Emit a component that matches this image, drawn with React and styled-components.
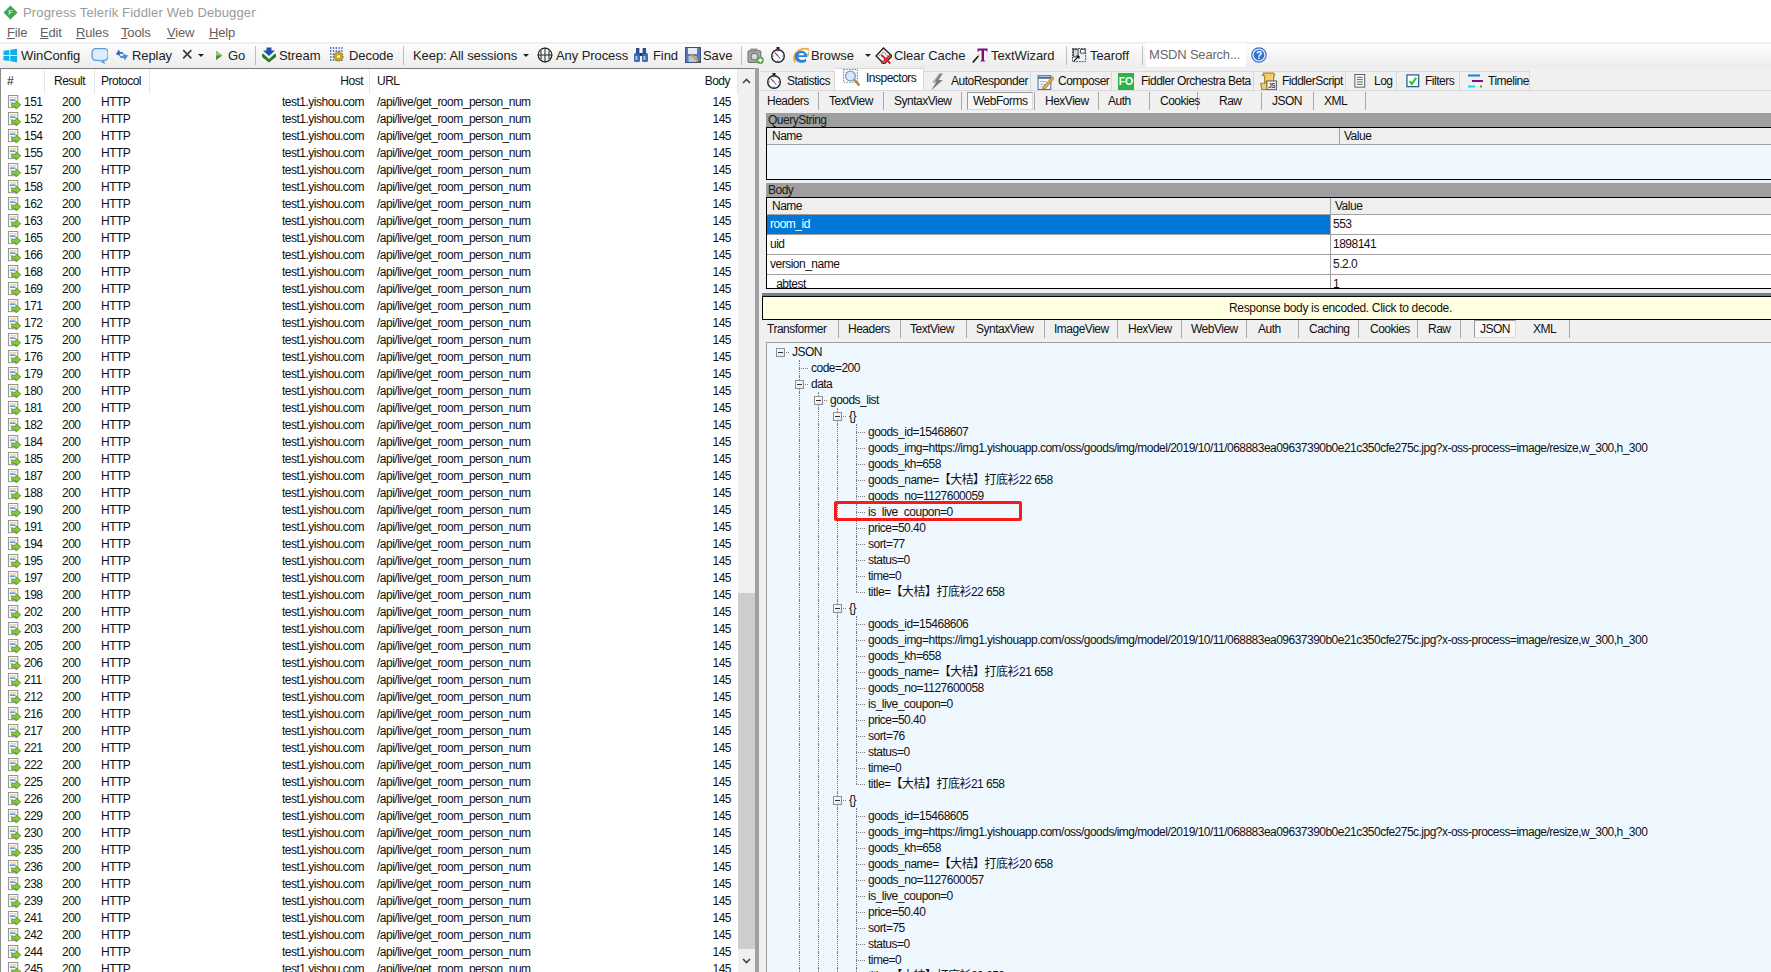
import React from "react";
import styled, { createGlobalStyle } from "styled-components";

const FONT = `"Liberation Sans", "Noto Sans CJK SC", sans-serif`;

const GlobalStyle = createGlobalStyle`
  html, body { margin: 0; padding: 0; background: #fff; overflow: hidden; }
  body { font-family: ${FONT}; font-size: 12px; color: #111; }
`;

const Page = styled.div`
  width: 1771px;
  height: 972px;
  overflow: hidden;
  display: flex;
  flex-direction: column;
  letter-spacing: -0.5px;
`;

const TitleBar = styled.div`
  height: 22px;
  flex: none;
  display: flex;
  align-items: center;
  padding: 2px 0 0 3px;
  box-sizing: border-box;
  gap: 5px;
  font-size: 13px;
  letter-spacing: 0.15px;
  color: #9a9a9a;
`;

const MenuBar = styled.div`
  height: 20px;
  flex: none;
  display: flex;
  align-items: center;
  font-size: 13px;
  letter-spacing: -0.15px;
  color: #5f5f5f;
`;

const MenuItem = styled.span`
  width: ${(p) => p.$w}px;
  &:first-child { margin-left: 7px; }
  &::first-letter { text-decoration: underline; }
`;

const Toolbar = styled.div`
  height: 26px;
  flex: none;
  display: flex;
  align-items: center;
  padding: 0 0 2px 3px;
  box-sizing: border-box;
  border-top: 2px solid #efefef;
  background: linear-gradient(#fdfdfd, #ececec);
  font-size: 13px;
  letter-spacing: -0.08px;
  color: #222;
`;

const ToolItem = styled.div`
  width: ${(p) => p.$w}px;
  flex: none;
  display: flex;
  align-items: center;
  gap: ${(p) => p.$gap ?? 4}px;
  white-space: nowrap;
  box-sizing: border-box;
`;

const Caret = styled.i`
  width: 0;
  height: 0;
  border: 3px solid transparent;
  border-top: 3px solid #222;
  border-bottom: 0;
  margin-left: ${(p) => p.$ml || 0}px;
`;

const ToolSep = styled.div`
  flex: none;
  width: 1px;
  height: 19px;
  background: #bdbdbd;
  margin: 0 ${(p) => p.$r}px 0 ${(p) => p.$l}px;
`;

const SearchBox = styled.div`
  flex: none;
  width: 100px;
  height: 24px;
  line-height: 24px;
  padding-left: 3px;
  box-sizing: border-box;
  background: #fff;
  color: #6a6a6a;
  letter-spacing: -0.2px;
  margin-right: 5px;
`;

const Main = styled.div`
  flex: 1;
  min-height: 0;
  display: flex;
`;

const SessionPane = styled.div`
  width: 755px;
  flex: none;
  display: flex;
  background: #fff;
  border-top: 1px solid #7c7c7c;
  border-left: 1px solid #8a8a8a;
  box-sizing: border-box;
  overflow: hidden;
`;

const SessionTable = styled.div`
  flex: 1;
  min-width: 0;
  overflow: hidden;
`;

const COLUMNS = "44px 50px 55px 220px 1fr";

const HeaderRow = styled.div`
  display: grid;
  grid-template-columns: ${COLUMNS};
  height: 25px;
  align-items: stretch;
`;

const HeaderCell = styled.div`
  line-height: 24px;
  border-right: 1px solid #e6e6e6;
  box-sizing: border-box;
  padding: 0 6px;
  text-align: ${(p) => p.$align || "left"};
  &:last-child { padding-right: 7px; }
`;

const UrlHead = styled.span`
  float: left;
  margin-left: 1px;
`;

const SessionRow = styled.div`
  display: grid;
  grid-template-columns: ${COLUMNS};
  height: 17px;
  line-height: 17px;
  white-space: nowrap;
`;

const SessionId = styled.div`
  display: flex;
  align-items: center;
  gap: 2px;
  padding-left: 6px;
`;

const ResultCell = styled.div`
  padding-left: 17px;
`;

const PlainCell = styled.div`
  padding: 0 6px;
  text-align: ${(p) => p.$align || "left"};
`;

const UrlCell = styled.div`
  display: flex;
  justify-content: space-between;
  padding: 0 7px;
`;

const Scrollbar = styled.div`
  width: 17px;
  flex: none;
  display: flex;
  flex-direction: column;
  background: #f0f0f0;
`;

const ScrollArrow = styled.div`
  height: 23px;
  flex: none;
  display: flex;
  align-items: center;
  justify-content: center;
`;

const ScrollTrack = styled.div`
  flex: 1;
  padding-top: 501px;
  display: flex;
`;

const ScrollThumb = styled.div`
  flex: 1;
  background: #cdcdcd;
`;

const Splitter = styled.div`
  width: 4px;
  flex: none;
  background: #a0a0a0;
`;

const RightPane = styled.div`
  flex: 1;
  min-width: 0;
  display: flex;
  flex-direction: column;
  background: #f0f0f0;
  overflow: hidden;
`;

const MainTabs = styled.div`
  height: 22px;
  flex: none;
  display: flex;
  align-items: flex-end;
  padding-left: 1px;
  border-bottom: 1px solid #d9d9d9;
`;

const MainTab = styled.div`
  width: ${(p) => p.$w}px;
  height: ${(p) => (p.$active ? 22 : 19)}px;
  flex: none;
  display: flex;
  align-items: center;
  gap: ${(p) => p.$gap || 5}px;
  padding: ${(p) => (p.$active ? "0 0 4px 8px" : `0 0 0 ${p.$pad ?? 5}px`)};
  box-sizing: border-box;
  background: ${(p) => (p.$active ? "#fff" : "#f0f0f0")};
  border: 1px solid #d9d9d9;
  border-bottom: 0;
  border-left: 0;
  white-space: nowrap;
`;

const SubTabs = styled.div`
  height: 19px;
  flex: none;
  display: flex;
  align-items: center;
  padding-left: 1px;
`;

const RespTabs = styled(SubTabs)`
  height: 22px;
  padding-bottom: 4px;
  box-sizing: border-box;
`;

const SubTab = styled.div`
  width: ${(p) => p.$w}px;
  height: 18px;
  line-height: 18px;
  flex: none;
  padding-left: ${(p) => p.$pad}px;
  box-sizing: border-box;
  white-space: nowrap;
  border-right: ${(p) => (p.$noSep ? 0 : "1px solid #a8a8a8")};
`;

const ActiveBox = styled.span`
  display: inline-block;
  height: 18px;
  line-height: 17px;
  padding: 0 5px;
  box-sizing: border-box;
  background: #f8f8f8;
  border: 1px solid #9a9a9a;
  border-right-color: #dcdcdc;
  border-bottom-color: #dcdcdc;
`;

const Section = styled.div`
  flex: none;
  margin: ${(p) => p.$top || 0}px 0 0 7px;
`;

const SectionBar = styled.div`
  height: 14px;
  line-height: 14px;
  padding-left: 2px;
  background: #9f9f9f;
  color: #1a1a1a;
`;

const NameTable = styled.div`
  border: 1px solid #000;
  border-right: 0;
  height: ${(p) => p.$h}px;
  box-sizing: border-box;
  background: ${(p) => p.$bg};
  overflow: hidden;
`;

const NameHead = styled.div`
  display: grid;
  grid-template-columns: ${(p) => p.$split}px 1fr;
  height: 16px;
  line-height: 16px;
  background: #efefef;
  border-bottom: 1px solid #a0a0a0;
`;

const HeadCell = styled.div`
  padding-left: 5px;
  & + & { border-left: 1px solid #a0a0a0; padding-left: 4px; }
`;

const NameRow = styled.div`
  display: grid;
  grid-template-columns: ${(p) => p.$split}px 1fr;
  height: 20px;
  box-sizing: border-box;
  line-height: 19px;
  border-bottom: 1px solid #a0a0a0;
`;

const NameCell = styled.div`
  padding-left: 3px;
  background: ${(p) => (p.$selected ? "#0078d7" : "transparent")};
  color: ${(p) => (p.$selected ? "#fff" : "#111")};
  & + & { border-left: 1px solid #a0a0a0; padding-left: 2px; }
`;

const SlateBar = styled.div`
  height: 3px;
  flex: none;
  margin: 4px 0 0 3px;
  background: #708090;
`;

const NoticeBar = styled.div`
  height: 24px;
  line-height: 23px;
  flex: none;
  margin-left: 3px;
  padding-left: 147px;
  text-align: center;
  box-sizing: border-box;
  background: #ffffe1;
  border: 1px solid #000;
  border-right: 0;
  letter-spacing: -0.33px;
`;

const TreePane = styled.div`
  flex: 1;
  min-height: 0;
  margin-left: 7px;
  padding: 1px 0 0 13px;
  overflow: hidden;
  background: #f0f8ff;
  border-top: 1px solid #a0a0a0;
  border-left: 1px solid #a0a0a0;
  position: relative;
`;

const TreeRow = styled.div`
  display: flex;
  height: 16px;
  line-height: 16px;
  white-space: nowrap;
`;

const TreeSpacer = styled.div`
  width: 19px;
  flex: none;
`;

const TreeGuide = styled(TreeSpacer)`
  border-left: 1px dotted #7a7a7a;
  box-sizing: border-box;
`;

const TreeJoint = styled.div`
  position: relative;
  width: 12px;
  flex: none;
  &::before {
    content: "";
    position: absolute;
    left: 0;
    top: 8px;
    width: 9px;
    border-top: 1px dotted #7a7a7a;
  }
  &::after {
    content: "";
    position: absolute;
    left: 0;
    top: 0;
    height: ${(p) => (p.$last ? 8 : 16)}px;
    border-left: 1px dotted #7a7a7a;
    display: ${(p) => (p.$root ? "none" : "block")};
  }
`;

const Toggle = styled.span`
  position: absolute;
  z-index: 1;
  left: -4px;
  top: 4px;
  width: 9px;
  height: 9px;
  box-sizing: border-box;
  border: 1px solid #8f8f8f;
  background: linear-gradient(135deg, #fff, #e4e4e4);
  &::after {
    content: "";
    position: absolute;
    left: 1px;
    top: 3px;
    width: 5px;
    height: 1px;
    background: #333;
  }
`;

const TreeText = styled.span`
  letter-spacing: -0.52px;
`;

const Highlight = styled.div`
  position: absolute;
  left: 67px;
  top: 158px;
  width: 188px;
  height: 20px;
  box-sizing: border-box;
  border: 3px solid #fb1a1a;
  border-radius: 2px;
`;

/* ---------- icons ---------- */

const Svg = styled.svg`
  flex: none;
  display: block;
`;

const Icon = ({ s = 16, children }) => (
  <Svg width={s} height={s} viewBox="0 0 16 16">
    {children}
  </Svg>
);

const LogoIcon = () => (
  <Icon s={15}>
    <path d="M8 0.5 15.5 8 8 15.5 0.5 8Z" fill="#3fa64a" />
    <text x="8" y="11" fontSize="8" textAnchor="middle" fill="#fff" fontFamily="Liberation Sans">F</text>
  </Icon>
);

const SessionIcon = () => (
  <Icon s={15}>
    <rect x="1.5" y="0.5" width="10" height="13" fill="#fbfbfb" stroke="#8d8d8d" />
    <path d="M3 3h7" stroke="#e8cf8e" strokeWidth="1.4" />
    <path d="M3 5.5h6" stroke="#5d8fd0" strokeWidth="1.6" />
    <path d="M3 8h3" stroke="#c8c8c8" />
    <path d="M5 8.8h4.5V6.2L14.7 10.5 9.5 14.8v-2.6H5Z" fill="#8cc63f" stroke="#4e8a1c" strokeWidth="0.8" />
  </Icon>
);

const WinIcon = () => (
  <Icon s={15}>
    <path d="M0.5 3 6.8 2v5.4H0.5ZM7.8 1.8 15 .8v6.6H7.8ZM0.5 8.4h6.3v5.4L0.5 13ZM7.8 8.4H15v6.8l-7.2-1.2Z" fill="#11aeea" />
  </Icon>
);

const BubbleIcon = () => (
  <Icon s={17}>
    <path d="M4.5 1.5h8a3.5 3.5 0 0 1 3.5 3.5v4a3.5 3.5 0 0 1-3.5 3.5H11l1.8 2.8L8 12.5H4.5A3.5 3.5 0 0 1 1 9V5a3.5 3.5 0 0 1 3.5-3.5Z" fill="#dbeeff" stroke="#5b9bd5" strokeWidth="1.2" />
  </Icon>
);

const ReplayIcon = () => (
  <Icon s={14}>
    <path d="M1 7 4.5 1.5 5.5 4.5h3l1.5 2-4.5.2.7 2.4Z" fill="#2f6db8" />
    <path d="M15 8.5 11 14l-1.2-2.7H6.6L5 9.2l4.4-.2-.7-2.4Z" fill="#4a90d9" />
  </Icon>
);

const XIcon = () => (
  <Icon s={13}>
    <path d="M1.5 1.5 11.5 11.5M11.5 1.5 1.5 11.5" stroke="#3c3c3c" strokeWidth="2.1" />
  </Icon>
);

const PlayIcon = () => (
  <Icon s={11}>
    <path d="M3 1 12 8 3 15Z" fill="#4f8a2c" />
    <path d="M3 1 12 8H3Z" fill="#9cc677" />
  </Icon>
);

const StreamIcon = () => (
  <Icon s={16}>
    <path d="M5.5 0.5h5v3h3.5L8 9 2 3.5h3.5Z" fill="#1b4fb0" />
    <path d="M2 6.5 8 12l6-5.5 1 1V10L8 15.5 1 10V7.5Z" fill="#2e7d1e" />
  </Icon>
);

const DecodeIcon = () => (
  <Icon s={16}>
    <path d="M1 1h14M1 4h14M1 7h14M1 10h14M1 13h14" stroke="#2c4fa8" strokeWidth="1.4" strokeDasharray="1.4 1.4" />
    <circle cx="9.5" cy="9.5" r="4.6" fill="#c8a22a" stroke="#8a6d10" strokeDasharray="1.5 1" />
    <circle cx="9.5" cy="9.5" r="1.6" fill="#fff3c0" />
  </Icon>
);

const CrossIcon = () => (
  <Icon s={16}>
    <circle cx="8" cy="8" r="6.8" fill="none" stroke="#222" strokeWidth="1.2" />
    <path d="M8 0.5v15M0.5 8h15M4 3.5v9M12 3.5v9" stroke="#222" strokeWidth="1" fill="none" />
  </Icon>
);

const FindIcon = () => (
  <Icon s={16}>
    <rect x="1" y="6" width="6" height="9" rx="1.5" fill="#3c6cb4" />
    <rect x="9" y="6" width="6" height="9" rx="1.5" fill="#3c6cb4" />
    <rect x="3" y="1" width="3.4" height="6" fill="#2c4f8a" />
    <rect x="9.6" y="1" width="3.4" height="6" fill="#2c4f8a" />
    <rect x="6.5" y="6" width="3" height="3" fill="#1f3a68" />
    <rect x="2.4" y="9" width="2" height="4" fill="#a9c4ea" />
    <rect x="10.4" y="9" width="2" height="4" fill="#a9c4ea" />
  </Icon>
);

const SaveIcon = () => (
  <Icon s={16}>
    <rect x="0.5" y="0.5" width="15" height="15" fill="#5b78b8" stroke="#3b4f80" />
    <rect x="3" y="1" width="9" height="6" fill="#e8eef8" />
    <rect x="3.5" y="9" width="8" height="6" fill="#b9c5dc" />
    <path d="M6 7 14 15" stroke="#c9a24a" strokeWidth="2.2" />
    <path d="M13 14 15.5 15.5" stroke="#444" strokeWidth="1.2" />
  </Icon>
);

const CameraIcon = () => (
  <Icon s={17}>
    <rect x="1" y="3.5" width="12" height="11" rx="1" fill="#a8a8a8" stroke="#6e6e6e" />
    <rect x="3" y="1.5" width="7" height="2.5" fill="#8d8d8d" />
    <circle cx="7" cy="9" r="3.2" fill="#d9d9d9" stroke="#6e6e6e" />
    <circle cx="12.5" cy="12.5" r="3.4" fill="#4caf2f" />
    <path d="M12.5 10.5v4M10.5 12.5h4" stroke="#fff" strokeWidth="1.3" />
  </Icon>
);

const TimerIcon = () => (
  <Icon s={16}>
    <rect x="6.5" y="0" width="3" height="2" fill="#222" />
    <circle cx="8" cy="9" r="6.3" fill="#fafdff" stroke="#222" strokeWidth="1.4" />
    <path d="M8 9 4.8 5.6" stroke="#e3342f" strokeWidth="1.3" />
    <path d="M8 9 10.5 12" stroke="#2a6fbf" strokeWidth="1" />
    <path d="M8 3.6v1M8 13.4v1M2.8 9h1M12.2 9h1" stroke="#555" />
  </Icon>
);

const IeIcon = () => (
  <Icon s={17}>
    <path d="M3 14.5C.8 11.5 2 6 6 3.5c3.5-2.2 8-2.6 9.8-1 1.2 1.2.3 3.6-1.2 5.5" fill="none" stroke="#f0a92b" strokeWidth="1.6" />
    <path d="M8.8 3.5a5.8 5.8 0 0 1 5.7 6H6c.2 3.2 4.8 3.8 7.2 1.3v3.1c-4 2.1-10.6.4-10.6-4.6 0-3.6 2.8-5.8 6.2-5.8Zm2.8 4.2c0-2.7-5-2.8-5.5 0Z" fill="#2a83d6" />
  </Icon>
);

const CacheIcon = () => (
  <Icon s={17}>
    <path d="M8 1 16 8.5 8.5 16 1 8.5Z" fill="#f4f4f4" stroke="#222" strokeWidth="1.3" />
    <path d="M4 8.5 8 4.5l4 4" fill="none" stroke="#777" strokeDasharray="1 1" />
    <path d="M6 7.5 14.5 15.5M14.5 7.5 6 15.5" stroke="#d8232a" strokeWidth="1.8" />
  </Icon>
);

const WizardIcon = () => (
  <Icon s={16}>
    <path d="M5.5 1.5h10V5L14 3.5h-2V13l1.4 1.4H8.2L9.6 13V3.5h-2L5.5 5Z" fill="#7b0f7e" />
    <path d="M0.8 15.5 6.4 9" stroke="#111" strokeWidth="1.6" />
    <path d="M6.2 8.6 7.8 7.4" stroke="#f3d23a" strokeWidth="1.8" />
  </Icon>
);

const TearIcon = () => (
  <Icon s={15}>
    <rect x="0.5" y="0.5" width="14" height="14" fill="#eef2f7" stroke="#444" strokeDasharray="2 1" />
    <rect x="1.5" y="1.5" width="5" height="8" fill="#cfd8e6" stroke="#444" />
    <path d="M9 1.5h5v4H9Z" fill="#fff" stroke="#444" />
    <path d="M2 14 7.5 8.5M7.5 8.5H4.5M7.5 8.5v3" stroke="#111" strokeWidth="1.2" />
  </Icon>
);

const HelpIcon = () => (
  <Icon s={16}>
    <circle cx="8" cy="8" r="7.2" fill="#d7e7fb" stroke="#3a70c9" strokeWidth="1.2" />
    <circle cx="8" cy="8" r="5.2" fill="#2e6fd0" />
    <text x="8" y="11.6" fontSize="10" fontWeight="700" textAnchor="middle" fill="#fff" fontFamily="Liberation Sans">?</text>
  </Icon>
);

const InspectIcon = () => (
  <Icon s={17}>
    <rect x="0.5" y="0.5" width="13" height="12" fill="none" stroke="#5f80a8" strokeDasharray="1.3 1.3" />
    <circle cx="7" cy="6.5" r="4.6" fill="#d4ecff" stroke="#7d99b8" strokeWidth="1.2" />
    <path d="M10.5 10 15.5 15.5" stroke="#b98a3c" strokeWidth="2.4" />
  </Icon>
);

const BoltIcon = () => (
  <Icon s={17}>
    <path d="M10 0.5 3 9h3.5L2 16.5 13 6.5H9L13 .5Z" fill="#7e7e7e" />
    <path d="M9.5 1 4.5 8h2" fill="none" stroke="#bdbdbd" />
  </Icon>
);

const ComposerIcon = () => (
  <Icon s={17}>
    <rect x="1" y="2.5" width="12" height="13" fill="#f7f9fc" stroke="#4d6f9c" />
    <path d="M1 4.5h12" stroke="#4d6f9c" strokeWidth="2" />
    <path d="M3 8h6M3 10.5h5M3 13h4" stroke="#a5b4c9" />
    <path d="M6 13 14.5 3.5l1.5 1.5L8 14.5l-2.5.8Z" fill="#f0b23c" stroke="#8b6414" strokeWidth="0.7" />
  </Icon>
);

const FoBadge = styled.span`
  flex: none;
  width: 16px;
  height: 17px;
  line-height: 17px;
  text-align: center;
  background: #2fb14b;
  color: #fff;
  font-size: 10.5px;
  font-weight: 700;
  letter-spacing: 0;
`;

const ScriptIcon = () => (
  <Icon s={18}>
    <path d="M4 1h9l1 2-1 1v5H5V3.5L3 3Z" fill="#f1cf6b" stroke="#a8861f" />
    <path d="M1.5 10h6v5.5h-5Z" fill="#f1cf6b" stroke="#a8861f" />
    <rect x="7" y="8" width="8.5" height="7.5" fill="#fff" stroke="#666" />
    <text x="11.2" y="14" fontSize="5.6" fontWeight="700" textAnchor="middle" fill="#333" fontFamily="Liberation Sans">JS</text>
  </Icon>
);

const LogIcon = () => (
  <Icon s={15}>
    <rect x="2" y="0.5" width="10.5" height="13.5" fill="#fff" stroke="#555" />
    <path d="M4 3.5h6.5M4 6h6.5M4 8.5h6.5M4 11h6.5" stroke="#555" />
  </Icon>
);

const FilterIcon = () => (
  <Icon s={15}>
    <rect x="1" y="1" width="12.5" height="12.5" fill="#fff" stroke="#1f5a8f" strokeWidth="1.3" />
    <path d="M3.8 7.5 6.2 10.6 11 3.8" fill="none" stroke="#19d12a" strokeWidth="2.2" />
  </Icon>
);

const TimelineIcon = () => (
  <Icon s={16}>
    <path d="M1 2.5h12" stroke="#0a84e0" strokeWidth="2" />
    <path d="M5 8h11" stroke="#7a0f80" strokeWidth="2" />
    <path d="M1 13.5h7" stroke="#00e5ef" strokeWidth="2" />
    <path d="M13 13.5h2" stroke="#16c42b" strokeWidth="2" />
  </Icon>
);

/* ---------- data ---------- */

const IDS = [151, 152, 154, 155, 157, 158, 162, 163, 165, 166, 168, 169, 171, 172, 175, 176, 179, 180, 181, 182, 184, 185, 187, 188, 190, 191, 194, 195, 197, 198, 202, 203, 205, 206, 211, 212, 216, 217, 221, 222, 225, 226, 229, 230, 235, 236, 238, 239, 241, 242, 244, 245];

const IMG = "https://img1.yishouapp.com/oss/goods/img/model/2019/10/11/068883ea09637390b0e21c350cfe275c.jpg?x-oss-process=image/resize,w_300,h_300";

const GOODS = [
  { id: 15468607, n: 22, no: 1127600059, sort: 77 },
  { id: 15468606, n: 21, no: 1127600058, sort: 76 },
  { id: 15468605, n: 20, no: 1127600057, sort: 75 },
];

const TREE = [
  { level: 0, text: "JSON", open: true, root: true },
  { level: 1, text: "code=200" },
  { level: 1, text: "data", open: true },
  { level: 2, text: "goods_list", open: true },
];

GOODS.forEach((g) => {
  TREE.push({ level: 3, text: "{}", open: true });
  [
    `goods_id=${g.id}`,
    `goods_img=${IMG}`,
    "goods_kh=658",
    `goods_name=【大桔】打底衫${g.n} 658`,
    `goods_no=${g.no}`,
    "is_live_coupon=0",
    "price=50.40",
    `sort=${g.sort}`,
    "status=0",
    "time=0",
  ].forEach((text) => TREE.push({ level: 4, text }));
  TREE.push({ level: 4, text: `title=【大桔】打底衫${g.n} 658`, last: true });
});

const MENU = [["File", 33], ["Edit", 36], ["Rules", 45], ["Tools", 46], ["View", 42], ["Help", 40]];

const SUB_TABS = [
  ["Headers", 59, 7], ["TextView", 65, 10], ["SyntaxView", 78, 10], ["WebForms", 73, 5, true], ["HexView", 64, 10],
  ["Auth", 51, 9], ["Cookies", 48, 10], ["Raw", 64, 21], ["JSON", 52, 10], ["XML", 52, 10],
];

const RESP_TABS = [
  ["Transformer", 79, 7], ["Headers", 62, 9], ["TextView", 66, 9], ["SyntaxView", 78, 9], ["ImageView", 73, 9],
  ["HexView", 64, 10], ["WebView", 65, 9], ["Auth", 52, 11], ["Caching", 60, 10], ["Cookies", 59, 11],
  ["Raw", 43, 10], ["JSON", 62, 13, true], ["XML", 47, 10],
];

const BODY_ROWS = [
  ["room_id", "553", true],
  ["uid", "1898141"],
  ["version_name", "5.2.0"],
  ["_abtest", "1"],
];

function TabStrip({ tabs, Strip }) {
  return (
    <Strip>
      {tabs.map(([label, w, pad, active]) => (
        <SubTab key={label} $w={w} $pad={pad} $noSep={label === "JSON" && w === 62}>
          {active ? <ActiveBox>{label}</ActiveBox> : label}
        </SubTab>
      ))}
    </Strip>
  );
}

function TreeLine({ row }) {
  const guides = Math.max(row.level - 1, 0);
  return (
    <TreeRow>
      {row.level > 0 && <TreeSpacer />}
      {Array.from({ length: guides }, (_, i) => (
        <TreeGuide key={i} />
      ))}
      <TreeJoint $last={row.last} $root={row.root}>
        {row.open && <Toggle />}
      </TreeJoint>
      <TreeText>{row.text}</TreeText>
    </TreeRow>
  );
}

export default function App() {
  return (
    <Page>
      <GlobalStyle />
      <TitleBar>
        <LogoIcon />
        Progress Telerik Fiddler Web Debugger
      </TitleBar>
      <MenuBar>
        {MENU.map(([m, w]) => (
          <MenuItem key={m} $w={w}>{m}</MenuItem>
        ))}
      </MenuBar>
      <Toolbar>
        <ToolItem $w={88} $gap={3}><WinIcon />WinConfig</ToolItem>
        <ToolItem $w={24}><BubbleIcon /></ToolItem>
        <ToolItem $w={67} $gap={3}><ReplayIcon />Replay</ToolItem>
        <ToolItem $w={32} $gap={3}><XIcon /><Caret /></ToolItem>
        <ToolItem $w={37} $gap={3}><PlayIcon />Go</ToolItem>
        <ToolSep $l={4} $r={5} />
        <ToolItem $w={68} $gap={2}><StreamIcon />Stream</ToolItem>
        <ToolItem $w={69}><DecodeIcon />Decode</ToolItem>
        <ToolSep $l={5} $r={9} />
        <ToolItem $w={124}>Keep: All sessions<Caret $ml={2} /></ToolItem>
        <ToolItem $w={96} $gap={3}><CrossIcon />Any Process</ToolItem>
        <ToolItem $w={52}><FindIcon />Find</ToolItem>
        <ToolItem $w={52} $gap={2}><SaveIcon />Save</ToolItem>
        <ToolSep $l={4} $r={5} />
        <ToolItem $w={23}><CameraIcon /></ToolItem>
        <ToolItem $w={22}><TimerIcon /></ToolItem>
        <ToolItem $w={83} $gap={2}><IeIcon />Browse<Caret $ml={9} /></ToolItem>
        <ToolItem $w={97} $gap={2}><CacheIcon />Clear Cache</ToolItem>
        <ToolItem $w={90} $gap={3}><WizardIcon />TextWizard</ToolItem>
        <ToolSep $l={4} $r={5} />
        <ToolItem $w={66} $gap={3}><TearIcon />Tearoff</ToolItem>
        <ToolSep $l={4} $r={3} />
        <SearchBox>MSDN Search...</SearchBox>
        <HelpIcon />
      </Toolbar>
      <Main>
        <SessionPane>
          <SessionTable>
            <HeaderRow>
              <HeaderCell>#</HeaderCell>
              <HeaderCell $align="center">Result</HeaderCell>
              <HeaderCell>Protocol</HeaderCell>
              <HeaderCell $align="right">Host</HeaderCell>
              <HeaderCell $align="right">
                <UrlHead>URL</UrlHead>Body
              </HeaderCell>
            </HeaderRow>
            {IDS.map((id) => (
              <SessionRow key={id}>
                <SessionId><SessionIcon />{id}</SessionId>
                <ResultCell>200</ResultCell>
                <PlainCell>HTTP</PlainCell>
                <PlainCell $align="right">test1.yishou.com</PlainCell>
                <UrlCell>
                  <span>/api/live/get_room_person_num</span>
                  <span>145</span>
                </UrlCell>
              </SessionRow>
            ))}
          </SessionTable>
          <Scrollbar>
            <ScrollArrow>
              <svg width="9" height="6" viewBox="0 0 9 6"><path d="M1 5 4.5 1.5 8 5" fill="none" stroke="#444" strokeWidth="1.6" /></svg>
            </ScrollArrow>
            <ScrollTrack><ScrollThumb /></ScrollTrack>
            <ScrollArrow>
              <svg width="9" height="6" viewBox="0 0 9 6"><path d="M1 1 4.5 4.5 8 1" fill="none" stroke="#444" strokeWidth="1.6" /></svg>
            </ScrollArrow>
          </Scrollbar>
        </SessionPane>
        <Splitter />
        <RightPane>
          <MainTabs>
            <MainTab $w={75} $pad={6}><TimerIcon />Statistics</MainTab>
            <MainTab $w={89} $active $gap={6}><InspectIcon />Inspectors</MainTab>
            <MainTab $w={107} $gap={5}><BoltIcon />AutoResponder</MainTab>
            <MainTab $w={81} $pad={6} $gap={4}><ComposerIcon />Composer</MainTab>
            <MainTab $w={142} $pad={6} $gap={7}><FoBadge>FO</FoBadge>Fiddler Orchestra Beta</MainTab>
            <MainTab $w={92} $gap={5}><ScriptIcon />FiddlerScript</MainTab>
            <MainTab $w={51} $pad={7} $gap={6}><LogIcon />Log</MainTab>
            <MainTab $w={63} $pad={9} $gap={4}><FilterIcon />Filters</MainTab>
            <MainTab $w={70} $pad={7} $gap={5}><TimelineIcon />Timeline</MainTab>
          </MainTabs>
          <TabStrip tabs={SUB_TABS} Strip={SubTabs} />
          <Section $top={3}>
            <SectionBar>QueryString</SectionBar>
            <NameTable $h={53} $bg="#f0f8ff">
              <NameHead $split={572}>
                <HeadCell>Name</HeadCell>
                <HeadCell>Value</HeadCell>
              </NameHead>
            </NameTable>
          </Section>
          <Section $top={3}>
            <SectionBar>Body</SectionBar>
            <NameTable $h={92} $bg="#fff">
              <NameHead $split={563}>
                <HeadCell>Name</HeadCell>
                <HeadCell>Value</HeadCell>
              </NameHead>
              {BODY_ROWS.map(([name, value, selected]) => (
                <NameRow key={name} $split={563}>
                  <NameCell $selected={selected}>{name}</NameCell>
                  <NameCell>{value}</NameCell>
                </NameRow>
              ))}
            </NameTable>
          </Section>
          <SlateBar />
          <NoticeBar>Response body is encoded. Click to decode.</NoticeBar>
          <TabStrip tabs={RESP_TABS} Strip={RespTabs} />
          <TreePane>
            {TREE.map((row, i) => (
              <TreeLine key={i} row={row} />
            ))}
            <Highlight />
          </TreePane>
        </RightPane>
      </Main>
    </Page>
  );
}
